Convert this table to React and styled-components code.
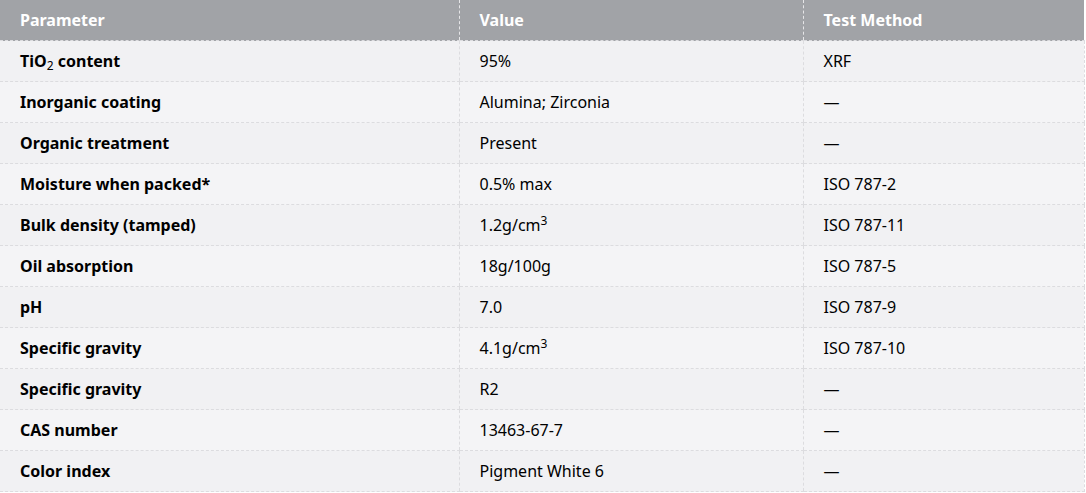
import React from 'react';
import styled, { createGlobalStyle } from 'styled-components';

const GlobalStyle = createGlobalStyle`
  body {
    margin: 0;
    background: #ffffff;
    font-family: 'Noto Sans', 'Open Sans', sans-serif;
  }
`;

const Table = styled.table`
  width: 1084px;
  border-collapse: collapse;
  table-layout: fixed;
  font-size: 16px;
  color: #000;
`;

const HeadCell = styled.th`
  height: 40px;
  padding: 0 20px;
  text-align: left;
  font-weight: 700;
  color: #fff;
  background: #a1a3a7;
  border-bottom: 1px dashed #dcdcdf;
  border-left: ${(p) => (p.first ? 'none' : '1px dashed #e6e6e8')};
`;

const Row = styled.tr`
  background: ${(p) => (p.odd ? '#f4f4f6' : '#f1f1f3')};
`;

const Cell = styled.td`
  height: 40px;
  padding: 0 20px;
  font-weight: ${(p) => (p.bold ? 700 : 400)};
  border-bottom: 1px dashed #dcdcdf;
  border-left: ${(p) => (p.first ? 'none' : '1px dashed #dcdcdf')};
  border-right: ${(p) => (p.last ? '1px dashed #dcdcdf' : 'none')};
`;

const Sub = styled.sub`
  font-weight: 400;
  font-size: 12px;
  vertical-align: -3px;
  line-height: 0;
`;

const Sup = styled.sup`
  font-size: 12px;
  vertical-align: 6px;
  line-height: 0;
`;

const rows = [
  [<>TiO<Sub>2</Sub> content</>, '95%', 'XRF'],
  ['Inorganic coating', 'Alumina; Zirconia', '—'],
  ['Organic treatment', 'Present', '—'],
  ['Moisture when packed*', '0.5% max', 'ISO 787-2'],
  ['Bulk density (tamped)', <>1.2g/cm<Sup>3</Sup></>, 'ISO 787-11'],
  ['Oil absorption', '18g/100g', 'ISO 787-5'],
  ['pH', '7.0', 'ISO 787-9'],
  ['Specific gravity', <>4.1g/cm<Sup>3</Sup></>, 'ISO 787-10'],
  ['Specific gravity', 'R2', '—'],
  ['CAS number', '13463-67-7', '—'],
  ['Color index', 'Pigment White 6', '—'],
];

export default function App() {
  return (
    <>
      <GlobalStyle />
      <Table>
        <colgroup>
          <col style={{ width: 459 }} />
          <col style={{ width: 344 }} />
          <col style={{ width: 281 }} />
        </colgroup>
        <thead>
          <tr>
            <HeadCell first>Parameter</HeadCell>
            <HeadCell>Value</HeadCell>
            <HeadCell>Test Method</HeadCell>
          </tr>
        </thead>
        <tbody>
          {rows.map(([param, value, method], i) => (
            <Row key={i} odd={i % 2 === 1}>
              <Cell first bold>{param}</Cell>
              <Cell>{value}</Cell>
              <Cell last>{method}</Cell>
            </Row>
          ))}
        </tbody>
      </Table>
    </>
  );
}
